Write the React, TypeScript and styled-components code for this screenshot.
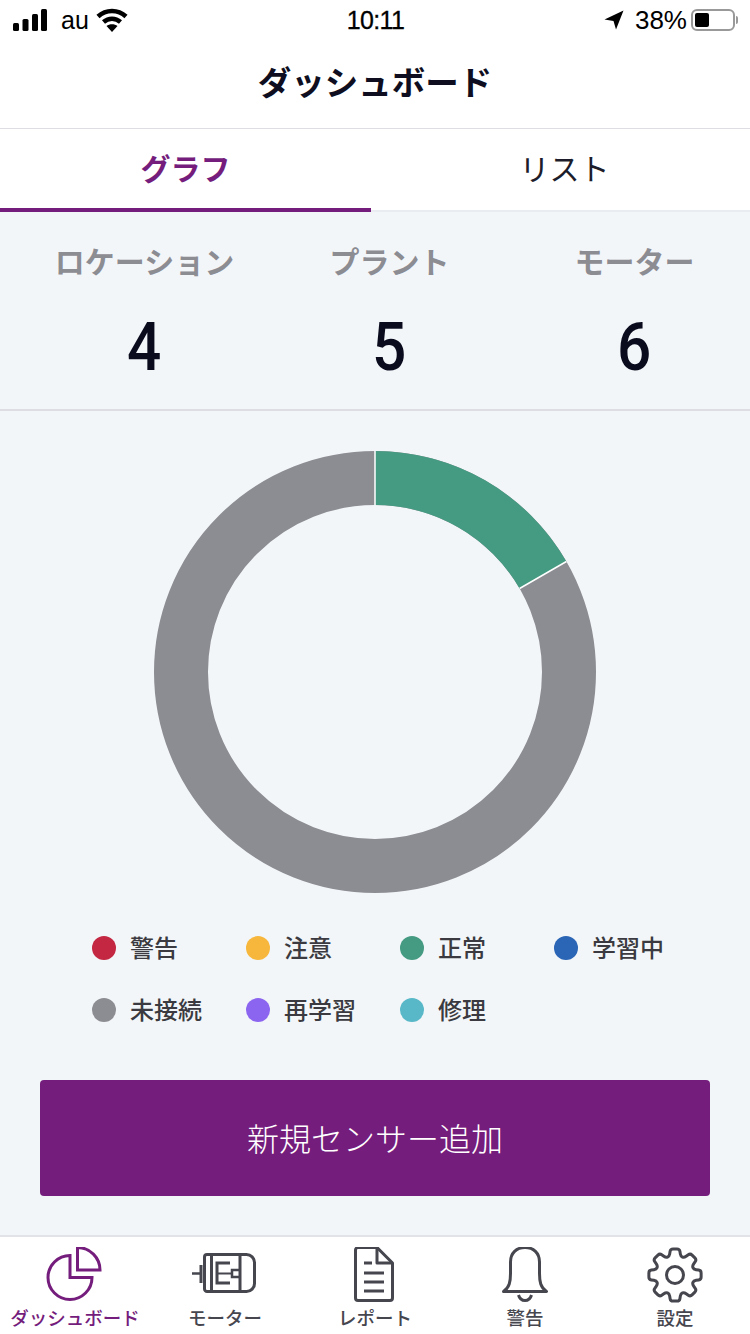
import React from "react";
import styled, { createGlobalStyle } from "styled-components";

const PURPLE = "#751d7c";
const ICON = "#46464f";

const LEGEND = [
  { label: "警告", color: "#c32742" },
  { label: "注意", color: "#f6b73c" },
  { label: "正常", color: "#459b82" },
  { label: "学習中", color: "#2b65b5" },
  { label: "未接続", color: "#8c8c93" },
  { label: "再学習", color: "#8b65f0" },
  { label: "修理", color: "#58b8c8" },
];

const STATS = [
  { label: "ロケーション", value: 4 },
  { label: "プラント", value: 5 },
  { label: "モーター", value: 6 },
];

// outline of the settings gear: 8 square teeth with softened corners
const gearPath = (() => {
  const pts: [number, number][] = [];
  for (let i = 0; i < 8; i++) {
    const a = (i * Math.PI) / 4 - Math.PI / 2;
    const at = (r: number, d: number): [number, number] => [
      29 + r * Math.cos(a + d),
      29 + r * Math.sin(a + d),
    ];
    pts.push(at(19.5, -0.3), at(26.5, -0.17), at(26.5, 0.17), at(19.5, 0.3));
  }
  const toward = (p: number[], q: number[], t: number) => {
    const dx = q[0] - p[0];
    const dy = q[1] - p[1];
    const len = Math.hypot(dx, dy);
    const d = Math.min(t, len / 2);
    return `${(p[0] + (dx / len) * d).toFixed(2)} ${(p[1] + (dy / len) * d).toFixed(2)}`;
  };
  return (
    pts
      .map((p, i) => {
        const prev = pts[(i + pts.length - 1) % pts.length];
        const next = pts[(i + 1) % pts.length];
        const start = toward(p, prev, 2.5);
        const end = toward(p, next, 2.5);
        return `${i === 0 ? "M" : "L"}${start}Q${p[0].toFixed(2)} ${p[1].toFixed(2)} ${end}`;
      })
      .join("") + "Z"
  );
})();

const PieIcon = () => (
  <svg width="60" height="56" viewBox="0 0 60 56" fill="none" stroke={PURPLE} strokeWidth="3">
    <path d="M25 8.5a22 22 0 1 0 22 22H25z" />
    <path d="M32.5 .5a22.5 22.5 0 0 1 22.5 22.5H32.5z" />
  </svg>
);

const MotorIcon = () => (
  <svg width="66" height="56" viewBox="0 0 66 56" fill="none" stroke={ICON} strokeWidth="3">
    <path d="M15 7.5h39.5a8 8 0 0 1 8 8v21a8 8 0 0 1-8 8H15a2.5 2.5 0 0 1-2.5-2.5V10A2.5 2.5 0 0 1 15 7.5z" />
    <path d="M19.5 7.5v37M48 7.5v37" />
    <path d="M9 18v18" />
    <path d="M0 26.5h9" strokeWidth="2.5" />
    <path d="M25 16h13M25 36h13M25 14.5v23" />
    <path d="M25 26.5h15" strokeWidth="2" />
    <path d="M48 23h-8v7h8" strokeWidth="2.5" />
  </svg>
);

const ReportIcon = () => (
  <svg width="42" height="56" viewBox="0 0 42 56" fill="none" stroke={ICON} strokeWidth="3" strokeLinejoin="round">
    <path d="M1.5 3A2.5 2.5 0 0 1 4 .5H23L38.5 16v35a2.5 2.5 0 0 1-2.5 2.5H4A2.5 2.5 0 0 1 1.5 51z" />
    <path d="M23 .5V16h15.5" />
    <path d="M10 16h8M10 26h20M10 35h20M10 44h20" />
  </svg>
);

const BellIcon = () => (
  <svg width="48" height="56" viewBox="0 0 48 56" fill="none" stroke={ICON} strokeWidth="3" strokeLinejoin="round">
    <path d="M2.5 44.5c6-4 7-10 7-18V15C9.5 6 15.5 .5 24 .5S38.500 6 38.500 15v11.500c0 8 1 14 7 18z" />
    <path d="M17.500 48c1 3.500 3.500 5.500 6.500 5.500s5.500-2 6.500-5.500" />
  </svg>
);

const GearIcon = () => (
  <svg width="58" height="58" viewBox="0 0 58 58" fill="none" stroke={ICON} strokeWidth="3" strokeLinejoin="round">
    <circle cx="29" cy="29" r="8.5" />
    <path d={gearPath} />
  </svg>
);

const NAV = [
  { label: "ダッシュボード", icon: <PieIcon />, active: true },
  { label: "モーター", icon: <MotorIcon />, active: false },
  { label: "レポート", icon: <ReportIcon />, active: false },
  { label: "警告", icon: <BellIcon />, active: false },
  { label: "設定", icon: <GearIcon />, active: false },
];

const App: React.FC = () => (
  <Screen>
    <GlobalStyle />
    <StatusBar>
      <StatusSide>
        <svg width="34" height="22" viewBox="0 0 34 22" fill="#000">
          <rect x="0" y="14" width="6" height="8" rx="1.5" />
          <rect x="9.5" y="10" width="6" height="12" rx="1.5" />
          <rect x="19" y="5" width="6" height="17" rx="1.5" />
          <rect x="28" y="0" width="6" height="22" rx="1.5" />
        </svg>
        <Carrier>au</Carrier>
        <Wifi width="32" height="24" viewBox="0 0 32 24" fill="none" stroke="#000" strokeWidth="4.5">
          <path d="M2 8.5c8-7.5 20-7.5 28 0" />
          <path d="M7.5 14c5-4.5 12-4.5 17 0" />
          <path d="M16 24l-5.5-6c3-2.5 8-2.5 11 0z" fill="#000" stroke="none" />
        </Wifi>
      </StatusSide>
      <Clock>10:11</Clock>
      <StatusRight>
        <svg width="20" height="20" viewBox="0 0 20 20" fill="#000">
          <path d="M19.5 .5L.5 9.5l9 1.5L12 19.5z" />
        </svg>
        <Percent>38%</Percent>
        <Battery>
          <BatteryLevel />
        </Battery>
        <BatteryCap />
      </StatusRight>
    </StatusBar>
    <Header>
      <Title>ダッシュボード</Title>
    </Header>
    <Tabs>
      <Tab $active>グラフ</Tab>
      <Tab $inset>リスト</Tab>
    </Tabs>
    <Stats>
      {STATS.map((s) => (
        <Stat key={s.label}>
          <StatLabel>{s.label}</StatLabel>
          <StatValue>{s.value}</StatValue>
        </Stat>
      ))}
    </Stats>
    <ChartArea>
      <svg width="442" height="442" viewBox="-221 -221 442 442">
        <circle r="194" fill="none" stroke="#8c8c93" strokeWidth="54" />
        <path d="M0 -221A221 221 0 0 1 191.4 -110.5L144.6 -83.5A167 167 0 0 0 0 -167Z" fill="#459b82" />
        <path d="M0 -221V-167M191.4 -110.5L144.6 -83.5" stroke="#fff" strokeWidth="1.5" />
      </svg>
    </ChartArea>
    <Legend>
      {LEGEND.map((item) => (
        <LegendItem key={item.label}>
          <Dot $color={item.color} />
          <LegendLabel>{item.label}</LegendLabel>
        </LegendItem>
      ))}
    </Legend>
    <ButtonRow>
      <AddButton>新規センサー追加</AddButton>
    </ButtonRow>
    <BottomNav>
      {NAV.map((n) => (
        <NavItem key={n.label}>
          <NavIcon>{n.icon}</NavIcon>
          <NavLabel $active={n.active}>{n.label}</NavLabel>
        </NavItem>
      ))}
    </BottomNav>
  </Screen>
);

export default App;

const GlobalStyle = createGlobalStyle`
  html, body {
    margin: 0;
    padding: 0;
    background: #f3f6f9;
  }
  * {
    box-sizing: border-box;
  }
`;

const Screen = styled.div`
  width: 750px;
  height: 1334px;
  display: flex;
  flex-direction: column;
  overflow: hidden;
  background: #f3f6f9;
  font-family: "Noto Sans CJK JP", "Noto Sans", sans-serif;
`;

const StatusBar = styled.div`
  height: 40px;
  flex: none;
  background: #fff;
  display: grid;
  grid-template-columns: 1fr auto 1fr;
  align-items: center;
  padding: 0 12px 0 13px;
  font-family: "Liberation Sans", sans-serif;
  color: #000;
`;

const StatusSide = styled.div`
  display: flex;
  align-items: center;
  gap: 14px;
`;

const Wifi = styled.svg`
  margin-left: -7px;
`;

const Carrier = styled.span`
  font-size: 25px;
`;

const Clock = styled.span`
  font-size: 25px;
  letter-spacing: -0.6px;
  -webkit-text-stroke: 0.3px #000;
`;

const StatusRight = styled.div`
  display: flex;
  align-items: center;
  justify-content: flex-end;
`;

const Percent = styled.span`
  font-size: 26px;
  margin: 0 4px 0 11px;
`;

const Battery = styled.div`
  width: 44px;
  height: 22px;
  border: 2px solid #999;
  border-radius: 6px;
  padding: 2px;
`;

const BatteryLevel = styled.div`
  width: 14px;
  height: 100%;
  background: #000;
  border-radius: 2px;
`;

const BatteryCap = styled.div`
  width: 2px;
  height: 8px;
  margin-left: 1px;
  background: #999;
  border-radius: 0 2px 2px 0;
`;

const Header = styled.div`
  height: 89px;
  flex: none;
  background: #fff;
  border-bottom: 1px solid #dddde3;
  display: flex;
  align-items: center;
  justify-content: center;
  padding-bottom: 8px;
`;

const Title = styled.h1`
  margin: 0;
  font-size: 33.5px;
  font-weight: 700;
  color: #0e0e20;
`;

const Tabs = styled.div`
  height: 83px;
  flex: none;
  display: grid;
  grid-template-columns: 371px 1fr;
  background: #fff;
  border-bottom: 2px solid #e9edf2;
`;

const Tab = styled.div<{ $active?: boolean; $inset?: boolean }>`
  display: flex;
  align-items: center;
  justify-content: center;
  height: 83px;
  padding-bottom: 3px;
  padding-left: ${(p) => (p.$inset ? 8 : 0)}px;
  font-size: 30px;
  font-weight: ${(p) => (p.$active ? 700 : 400)};
  color: ${(p) => (p.$active ? PURPLE : "#1c1c2a")};
  border-bottom: 4px solid ${(p) => (p.$active ? PURPLE : "transparent")};
`;

const Stats = styled.div`
  height: 199px;
  flex: none;
  display: grid;
  grid-template-columns: repeat(3, 245px);
  padding-left: 22px;
  border-bottom: 2px solid #dddde3;
`;

const Stat = styled.div`
  display: flex;
  flex-direction: column;
  align-items: center;
  padding-top: 26px;
`;

const StatLabel = styled.div`
  font-size: 30px;
  line-height: 44px;
  font-weight: 700;
  color: #8c8c93;
  white-space: nowrap;
`;

const StatValue = styled.div`
  margin-top: 25px;
  font-family: "Roboto", sans-serif;
  font-size: 67px;
  line-height: 80px;
  font-weight: 500;
  color: #0b0b1e;
  transform: scaleX(0.9);
`;

const ChartArea = styled.div`
  flex: none;
  display: flex;
  justify-content: center;
  padding-top: 40px;
`;

const Legend = styled.div`
  flex: none;
  margin-top: 24px;
  padding-left: 92px;
  display: grid;
  grid-template-columns: repeat(4, 154px);
  grid-auto-rows: 62px;
`;

const LegendItem = styled.div`
  display: flex;
  align-items: center;
  gap: 14px;
`;

const Dot = styled.span<{ $color: string }>`
  width: 24px;
  height: 24px;
  border-radius: 50%;
  flex: none;
  background: ${(p) => p.$color};
`;

const LegendLabel = styled.span`
  font-size: 24px;
  line-height: 24px;
  font-weight: 500;
  color: #3a3a40;
  white-space: nowrap;
  padding-bottom: 2px;
`;

const ButtonRow = styled.div`
  flex: none;
  padding: 0 40px;
  margin-top: 39px;
`;

const AddButton = styled.button`
  width: 100%;
  height: 116px;
  border: none;
  border-radius: 4px;
  padding: 0 0 3px;
  background: ${PURPLE};
  color: #fff;
  font-family: inherit;
  font-size: 32px;
  font-weight: 300;
`;

const BottomNav = styled.nav`
  margin-top: auto;
  height: 99px;
  flex: none;
  background: #fff;
  border-top: 2px solid #e2e3e7;
  display: grid;
  grid-template-columns: repeat(5, 150px);
`;

const NavItem = styled.div`
  display: flex;
  flex-direction: column;
  align-items: center;
  padding-top: 9px;
`;

const NavIcon = styled.div`
  height: 58px;
  display: flex;
  align-items: center;
  justify-content: center;
`;

const NavLabel = styled.span<{ $active?: boolean }>`
  font-size: 18.5px;
  line-height: 26px;
  font-weight: 500;
  white-space: nowrap;
  color: ${(p) => (p.$active ? PURPLE : ICON)};
`;
